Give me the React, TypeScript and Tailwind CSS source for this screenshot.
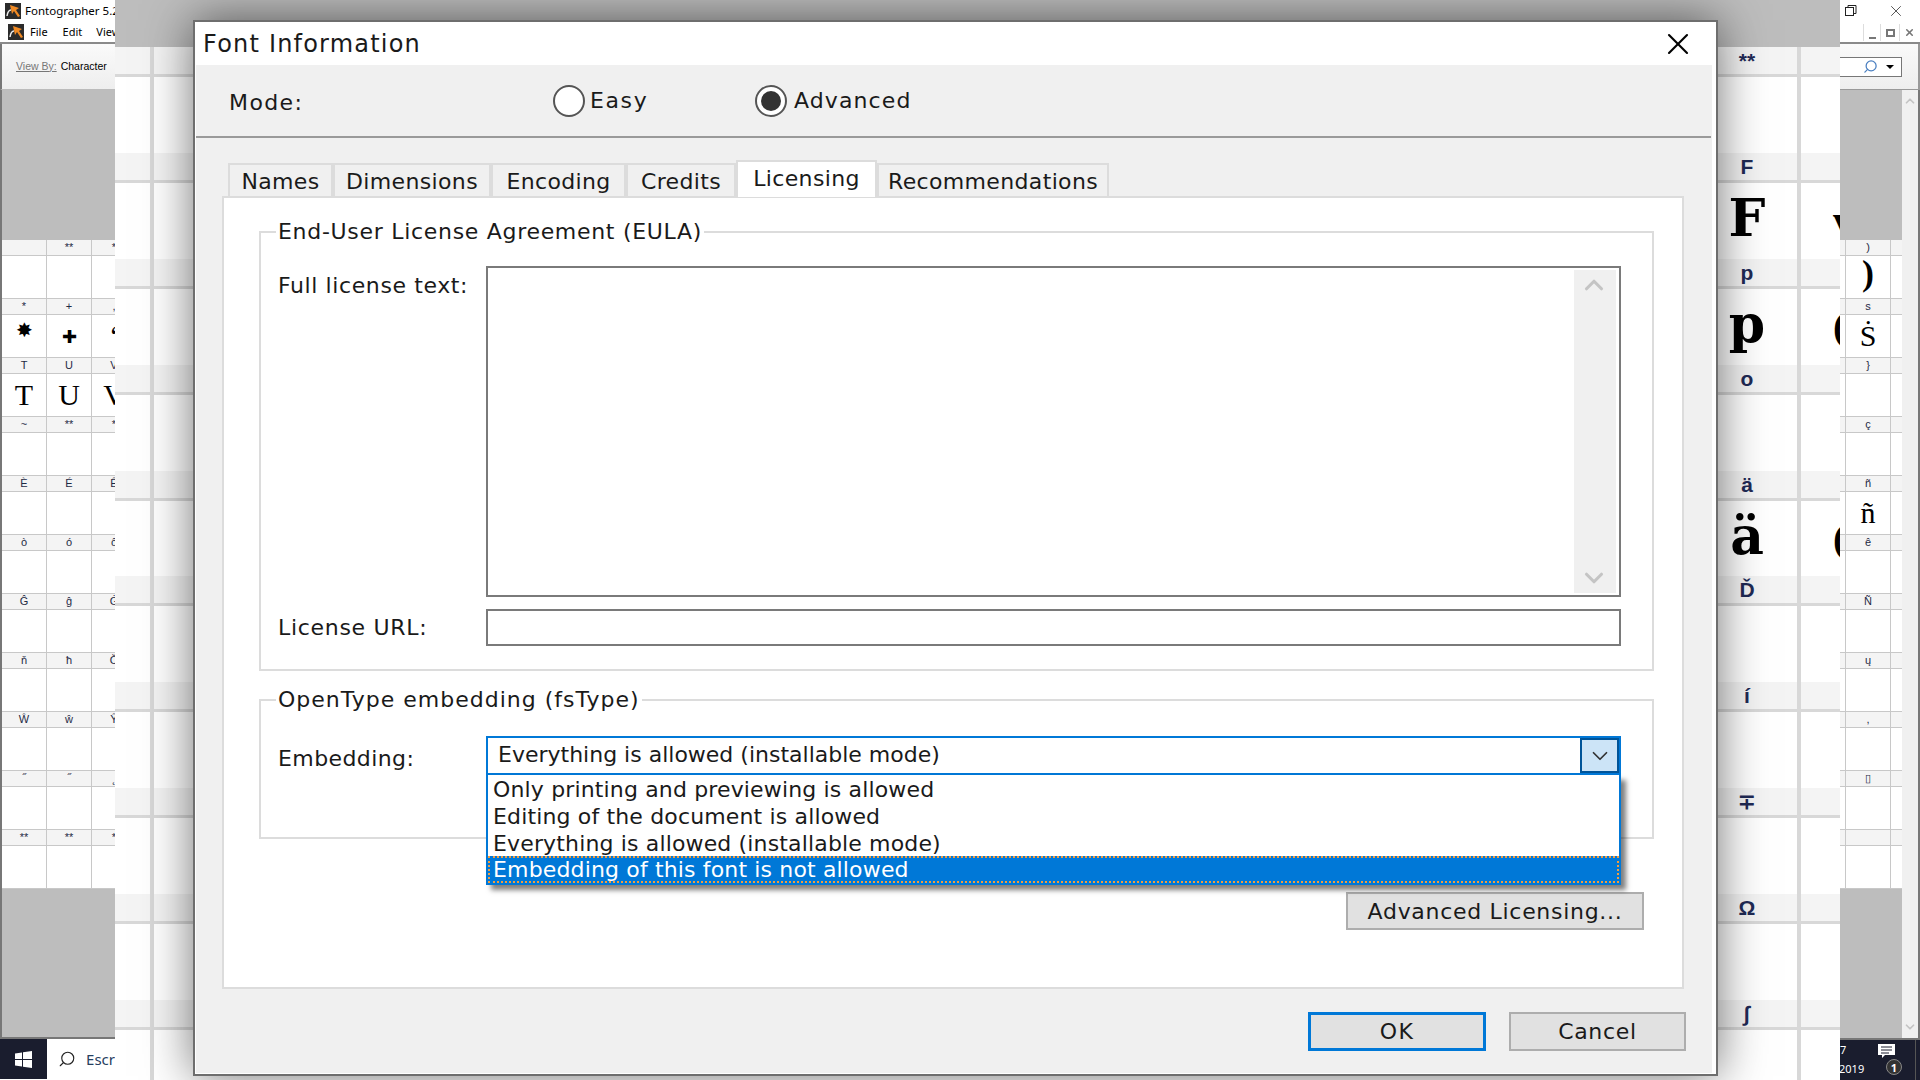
import React from "react";
import { ChevronDown, ChevronUp, Search, X } from "lucide-react";

type GridRow = { labels: string[]; glyphs?: string[] };

const leftRows: GridRow[] = [
  { labels: ["", "**", "*"] },
  { labels: ["*", "+", ","], glyphs: ["✸", "✚", "‘"] },
  { labels: ["T", "U", "V"], glyphs: ["T", "U", "V"] },
  { labels: ["~", "**", "*"] },
  { labels: ["È", "É", "Ê"] },
  { labels: ["ò", "ó", "ô"] },
  { labels: ["Ĝ", "ĝ", "Ġ"] },
  { labels: ["ň", "ħ", "Ŏ"] },
  { labels: ["Ŵ", "ŵ", "Ŷ"] },
  { labels: ["˝", "˝", "˛"] },
  { labels: ["**", "**", "*"] },
];

const rightRows: GridRow[] = [
  { labels: ["", ")"], glyphs: ["", ")"] },
  { labels: ["", "s"], glyphs: ["", "Ṡ"] },
  { labels: ["", "}"] },
  { labels: ["", "ç"] },
  { labels: ["", "ñ"], glyphs: ["", "ñ"] },
  { labels: ["", "ê"] },
  { labels: ["", "Ñ"] },
  { labels: ["", "ų"] },
  { labels: ["", ","] },
  { labels: ["", "▯"] },
  { labels: ["", ""] },
];

const midRows = [
  { label: "**", big: "", side: "" },
  { label: "F", big: "F", side: "v" },
  { label: "p", big: "p", side: "(" },
  { label: "o", big: "", side: "" },
  { label: "ä", big: "ä", side: "(" },
  { label: "Ď", big: "", side: "" },
  { label: "í", big: "", side: "" },
  { label: "∓", big: "", side: "" },
  { label: "Ω", big: "", side: "" },
  { label: "∫", big: "", side: "" },
];

const tabs = [
  { name: "Names", w: "w-[105px]" },
  { name: "Dimensions", w: "w-[158px]" },
  { name: "Encoding", w: "w-[135px]" },
  { name: "Credits", w: "w-[110px]" },
  { name: "Licensing", w: "w-[141px]", active: true },
  { name: "Recommendations", w: "w-[232px]" },
];

const options = [
  "Only printing and previewing is allowed",
  "Editing of the document is allowed",
  "Everything is allowed (installable mode)",
];

const AppLogo = () => (
  <svg width="16" height="16" viewBox="0 0 16 16" className="shrink-0">
    <rect width="16" height="16" fill="#2b2b2b" />
    <path d="M5 2 L14 5 L11 7 L15 13 L13 14 L9 8 L7 11 Z" fill="#f08a24" />
    <path d="M2 13 Q3 7 6 7" stroke="#eee" strokeWidth="1.5" fill="none" />
  </svg>
);

const glyphClass = (g: string) => {
  if (g === "✸") return "pb-[12px] text-[20px]";
  if (g === "✚") return "pt-[2px] text-[18px]";
  if (g === ")") return "pb-[8px] font-bold text-[36px]";
  return "text-[30px]";
};

const GlyphRow = ({ row, cols }: { row: GridRow; cols: string[] }) => (
  <div className="flex h-[59px] flex-col overflow-hidden">
    <div className="flex h-[16px] bg-[#f4f4f4] border-b border-[#c8c8c8]">
      {row.labels.map((l, i) => (
        <div key={i} className={`${cols[i]} shrink-0 border-r border-[#c8c8c8] text-center text-[11px] leading-[15px] text-[#1f2a44]`}>
          {l}
        </div>
      ))}
    </div>
    <div className="flex h-[43px] bg-white border-b border-[#c8c8c8]">
      {row.labels.map((_, i) => {
        const g = row.glyphs ? row.glyphs[i] : "";
        return (
          <div key={i} className={`${cols[i]} ${glyphClass(g)} shrink-0 border-r border-[#c8c8c8] flex items-center justify-center overflow-hidden font-['Liberation_Serif',serif] leading-none text-black`}>
            {g}
          </div>
        );
      })}
    </div>
  </div>
);

const LeftStrip = () => (
  <div className="flex w-[115px] shrink-0 flex-col overflow-hidden bg-white font-['Liberation_Sans',sans-serif]">
    <div className="flex h-[22px] items-center gap-[4px] pl-[5px] font-['Noto_Sans',sans-serif] text-[11.5px] whitespace-nowrap text-black">
      <AppLogo />
      <span>Fontographer 5.2</span>
    </div>
    <div className="flex h-[22px] items-center whitespace-nowrap border-b-2 border-[#8a8a8a] pl-[8px] font-['Noto_Sans',sans-serif] text-[11px] text-black">
      <AppLogo />
      <span className="ml-[6px]">File</span>
      <span className="ml-[15px]">Edit</span>
      <span className="ml-[14px] w-[19px] overflow-hidden">View</span>
    </div>
    <div className="flex h-[46px] items-center whitespace-nowrap border-b border-[#bbb] border-l-2 border-l-[#777] bg-gradient-to-b from-[#fafafa] to-[#eeeeee] pl-[14px] text-[10.5px]">
      <span className="text-[#777] underline">View By:</span>
      <span className="ml-[4px] text-black">Character</span>
    </div>
    <div className="h-[150px] border-l-2 border-[#777] bg-[#bdbdbd]" />
    <div className="border-l-2 border-[#777]">
      {leftRows.map((r, i) => (
        <GlyphRow key={i} row={r} cols={["w-[45px]", "w-[45px]", "w-[45px]"]} />
      ))}
    </div>
    <div className="h-[150px] border-b-2 border-l-2 border-[#777] bg-[#bdbdbd]" />
    <div className="flex h-[40px] shrink-0">
      <div className="flex w-[48px] items-center justify-center bg-[#1a1d2e]">
        <svg width="17" height="17" viewBox="0 0 17 17" fill="#fff">
          <path d="M0 2.4 L7 1.4 V8 H0 Z M8 1.2 L17 0 V8 H8 Z M0 9 H7 V15.6 L0 14.6 Z M8 9 H17 V17 L8 15.8 Z" />
        </svg>
      </div>
      <div className="flex flex-1 items-center gap-[10px] pl-[11px] font-['Noto_Sans',sans-serif] text-[15px] text-[#27405f]">
        <Search className="h-[18px] w-[18px] -scale-x-100 text-[#222]" strokeWidth={1.5} />
        <span>Escr</span>
      </div>
    </div>
  </div>
);

const MiddleArea = () => (
  <div className="flex min-w-0 flex-1 flex-col overflow-hidden bg-white">
    <div className="h-[47px] shrink-0 bg-[#bdbdbd]" />
    {midRows.map((r, i) => (
      <div key={i} className="flex h-[105.9px] shrink-0 flex-col">
        <div className="flex h-[30px] shrink-0 border-b-[3px] border-[#d8d8d8] bg-[#f4f4f4]">
          <div className="w-[39px] border-r-4 border-[#d8d8d8]" />
          <div className="flex flex-1 justify-end border-r-4 border-[#d8d8d8] pr-[10px]">
            <span className="w-[80px] text-center font-['Liberation_Sans',sans-serif] text-[21px] leading-[28px] font-bold text-[#1f2a55]">{r.label}</span>
          </div>
          <div className="w-[39px]" />
        </div>
        <div className="flex flex-1">
          <div className="w-[39px] border-r-4 border-[#d8d8d8]" />
          <div className="flex flex-1 items-center justify-end border-r-4 border-[#d8d8d8] pr-[10px]">
            <span className="-mt-[5px] w-[80px] text-center font-['DejaVu_Serif',serif] text-[52px] leading-none font-bold text-black">{r.big}</span>
          </div>
          <div className="flex w-[39px] items-center overflow-hidden pl-[32px] font-['Liberation_Serif',serif] text-[40px] leading-none font-bold text-black">
            {r.side}
          </div>
        </div>
      </div>
    ))}
  </div>
);

const RightStrip = () => (
  <div className="flex w-[80px] shrink-0 flex-col overflow-hidden bg-white font-['Liberation_Sans',sans-serif]">
    <div className="relative h-[22px]">
      <svg width="14" height="14" viewBox="0 0 14 14" fill="none" stroke="#222" className="absolute left-[4px] top-[4px]">
        <rect x="1.5" y="3.5" width="8" height="8" />
        <path d="M4 3.5 V1.5 H12 V9.5 H9.5" />
      </svg>
      <X className="absolute right-[15px] top-[2px] h-[18px] w-[18px] text-[#222]" strokeWidth={1} />
    </div>
    <div className="flex h-[22px] items-start justify-end gap-[1px] border-b-2 border-[#8a8a8a] pr-[2px] pt-[2px]">
      <div className="flex h-[17px] w-[18px] items-end justify-center border-x border-[#ddd] pb-[2px]">
        <div className="h-[2px] w-[7px] bg-[#777]" />
      </div>
      <div className="flex h-[17px] w-[18px] items-center justify-center border-r border-[#ddd]">
        <div className="h-[8px] w-[9px] border-2 border-[#777]" />
      </div>
      <div className="flex h-[17px] w-[17px] items-center justify-center">
        <X className="h-[11px] w-[11px] text-[#777]" strokeWidth={3.5} />
      </div>
    </div>
    <div className="flex h-[46px] items-center border-b border-r-2 border-[#999] bg-gradient-to-b from-[#fafafa] to-[#eeeeee]">
      <div className="flex h-[20px] w-[62px] items-center justify-end gap-[8px] border-y border-r border-[#777] bg-white pr-[7px]">
        <Search className="h-[15px] w-[15px] -scale-x-100 text-[#4a7fc0]" strokeWidth={2} />
        <div className="h-0 w-0 border-x-[4px] border-t-[4px] border-x-transparent border-t-black" />
      </div>
    </div>
    <div className="flex h-[950px] border-r-2 border-b-2 border-[#777]">
      <div className="flex w-[62px] flex-col">
        <div className="h-[150px] bg-[#bdbdbd]" />
        <div>
          {rightRows.map((r, i) => (
            <GlyphRow key={i} row={r} cols={["w-[6px]", "w-[45px]"]} />
          ))}
        </div>
        <div className="h-[149px] bg-[#bdbdbd]" />
      </div>
      <div className="flex flex-1 flex-col items-center justify-between bg-[#f0f0f0] py-[4px]">
        <ChevronUp className="h-[14px] w-[14px] text-[#c4c4c4]" strokeWidth={3} />
        <ChevronDown className="h-[14px] w-[14px] text-[#c4c4c4]" strokeWidth={3} />
      </div>
    </div>
    <div className="relative flex-1 bg-[#1a1d2e] font-['Noto_Sans',sans-serif] text-[11px] text-white">
      <span className="absolute left-0 top-[2px]">7</span>
      <span className="absolute -left-[1px] top-[21px]">2019</span>
      <svg width="18" height="16" viewBox="0 0 18 16" fill="#fff" className="absolute left-[38px] top-[4px]">
        <path d="M0 0 H17 V11 H7 L4 14 V11 H0 Z" />
        <path d="M3 3 H14 M3 6 H14 M3 9 H11" stroke="#1a1d2e" strokeWidth="1" />
      </svg>
      <div className="absolute left-[46px] top-[19px] flex h-[16px] w-[16px] items-center justify-center rounded-full border border-[#888] bg-[#333] text-[11px] leading-none font-bold">
        1
      </div>
      <div className="absolute right-[4px] top-0 h-full w-px bg-[#555]" />
    </div>
  </div>
);

const Radio = ({ label, checked, w, track }: { label: string; checked?: boolean; w: string; track: string }) => (
  <div className={`flex items-center ${w}`}>
    <div className="flex h-[32px] w-[32px] items-center justify-center rounded-full border-2 border-[#555] bg-white">
      {checked && <div className="h-[20px] w-[20px] rounded-full bg-[#333]" />}
    </div>
    <span className={track}>{label}</span>
  </div>
);

const Group = ({ title, track, className, children }: { title: string; track: string; className: string; children: React.ReactNode }) => (
  <div className={`relative border-2 border-[#dcdcdc] ${className}`}>
    <span className={`absolute -top-[16px] left-[15px] bg-white px-[2px] leading-[30px] whitespace-nowrap ${track}`}>{title}</span>
    {children}
  </div>
);

const FontDialog = () => (
  <div className="absolute left-[193px] top-[20px] flex h-[1056px] w-[1525px] flex-col border-2 border-[#6e6e6e] bg-white font-['DejaVu_Sans',sans-serif] text-[22px] text-[#1a1a1a] shadow-[0_0_45px_rgba(0,0,0,0.55)]">
    <div className="flex h-[43px] shrink-0 items-center justify-between pl-[8px] pr-[20px]">
      <span className="text-[24px] tracking-[1.2px]">Font Information</span>
      <X className="h-[36px] w-[36px] text-black" strokeWidth={1.4} />
    </div>
    <div className="mb-[1px] ml-[1px] mr-[4px] flex flex-1 flex-col bg-[#f0f0f0]">
      <div className="mr-[1px] flex h-[73px] shrink-0 items-center border-b-2 border-[#9a9a9a] pl-[33px]">
        <span className="w-[324px] pt-[3px] tracking-[1.4px]">Mode:</span>
        <Radio label="Easy" w="w-[202px] gap-[5px]" track="tracking-[1.6px]" />
        <Radio label="Advanced" checked w="w-[270px] gap-[7px]" track="tracking-[1.1px]" />
      </div>
      <div className="ml-[32px] mt-[21px] flex h-[37px] items-end tracking-[0.35px]">
        {tabs.map((t) => (
          <div
            key={t.name}
            className={
              t.active
                ? `relative z-10 -mb-px flex h-[37px] ${t.w} items-start justify-center border-2 border-b-0 border-[#dcdcdc] bg-white`
                : `flex h-[33px] ${t.w} items-center justify-center border-2 border-b-0 border-[#dcdcdc] bg-[#f0f0f0] pt-[2px]`
            }
          >
            {t.name}
          </div>
        ))}
      </div>
      <div className="ml-[26px] flex h-[793px] w-[1462px] flex-col border-2 border-[#dcdcdc] bg-white">
        <Group title="End-User License Agreement (EULA)" track="tracking-[0.7px]" className="ml-[35px] mt-[33px] h-[440px] w-[1395px]">
          <div className="ml-[17px] mr-[31px] mt-[33px] flex">
            <span className="w-[208px] pt-[3px] tracking-[0.6px]">Full license text:</span>
            <div className="flex h-[331px] flex-1 border-2 border-[#7a7a7a] bg-white p-[2px]">
              <div className="flex-1" />
              <div className="mr-[1px] flex w-[42px] flex-col items-center justify-between bg-[#f0f0f0] pr-[2px]">
                <ChevronUp className="h-[30px] w-[30px] text-[#c4c4c4]" strokeWidth={2.5} />
                <ChevronDown className="h-[30px] w-[30px] text-[#c4c4c4]" strokeWidth={2.5} />
              </div>
            </div>
          </div>
          <div className="ml-[17px] mr-[31px] mt-[12px] flex items-center">
            <span className="w-[208px] tracking-[0.7px]">License URL:</span>
            <div className="h-[37px] flex-1 border-2 border-[#7a7a7a] bg-white" />
          </div>
        </Group>
        <Group title="OpenType embedding (fsType)" track="tracking-[1px]" className="ml-[35px] mt-[28px] h-[140px] w-[1395px]">
          <div className="ml-[17px] mr-[31px] mt-[35px] flex items-center">
            <span className="w-[208px] pt-[4px] tracking-[0.4px]">Embedding:</span>
            <div className="relative flex h-[40px] flex-1 border-2 border-b-[3px] border-[#0078d7] bg-white">
              <span className="flex-1 pl-[10px] leading-[33px]">Everything is allowed (installable mode)</span>
              <div className="flex w-[39px] items-center justify-center border-2 border-[#005499] bg-[#cce4f7]">
                <ChevronDown className="h-[26px] w-[26px] text-[#333]" strokeWidth={1.6} />
              </div>
              <div className="absolute -left-[2px] -right-[2px] top-[37px] z-20 border-2 border-t-0 border-[#0078d7] bg-white leading-[29px] tracking-[0.15px] shadow-[5px_5px_5px_rgba(0,0,0,0.5)]">
                {options.map((o) => (
                  <div key={o} className="h-[27px] pl-[5px]">
                    {o}
                  </div>
                ))}
                <div className="h-[27px] border-2 border-dotted border-[#f39c3d] bg-[#0078d7] pl-[3px] leading-[24px] text-white">
                  Embedding of this font is not allowed
                </div>
              </div>
            </div>
          </div>
        </Group>
        <div className="mr-[38px] mt-[53px] flex h-[38px] w-[298px] items-center justify-center self-end border-2 border-[#adadad] bg-[#e1e1e1] tracking-[0.7px]">
          Advanced Licensing...
        </div>
      </div>
      <div className="mr-[26px] mt-[23px] flex justify-end gap-[23px]">
        <div className="flex h-[39px] w-[178px] items-center justify-center border-[3px] border-[#0078d7] bg-[#e1e1e1] tracking-[1.5px]">OK</div>
        <div className="flex h-[39px] w-[177px] items-center justify-center border-2 border-[#adadad] bg-[#e1e1e1] tracking-[0.7px]">Cancel</div>
      </div>
    </div>
  </div>
);

const App: React.FC = () => {
  return (
    <div className="relative flex h-[1080px] w-[1920px] overflow-hidden bg-white">
      <LeftStrip />
      <MiddleArea />
      <RightStrip />
      <FontDialog />
    </div>
  );
};

export default App;
